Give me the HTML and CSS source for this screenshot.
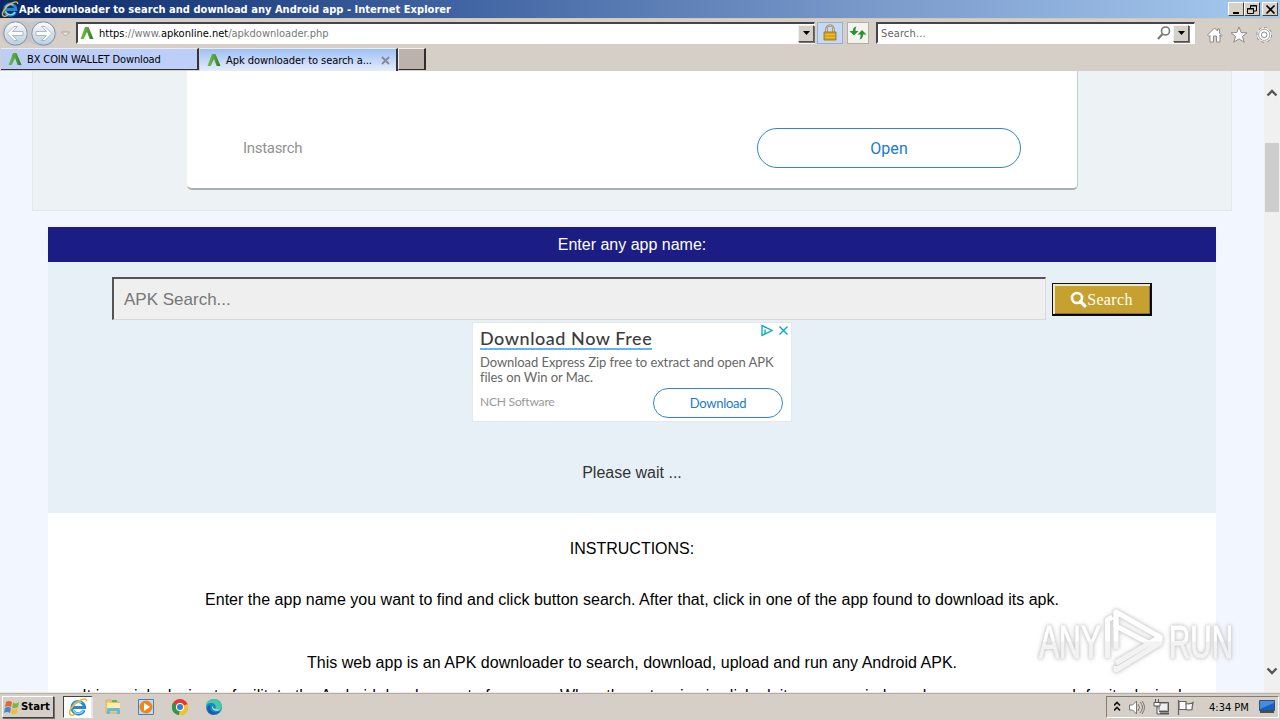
FILE: index.html
```html
<!DOCTYPE html>
<html lang="en">
<head>
<meta charset="utf-8">
<title>Apk downloader</title>
<link rel="stylesheet" href="styles.css">
</head>
<body>
<svg class="defs" width="0" height="0">
  <defs>
    <linearGradient id="leaf" x1="0" x2="1"><stop offset="0" stop-color="#72b944"/><stop offset=".5" stop-color="#57a639"/><stop offset="1" stop-color="#2d7331"/></linearGradient>
    <linearGradient id="round" x1="0" x2="0" y1="0" y2="1"><stop offset="0" stop-color="#fafcff"/><stop offset=".5" stop-color="#dce3ea"/><stop offset="1" stop-color="#b5d0e4"/></linearGradient>
    <linearGradient id="fade" gradientUnits="userSpaceOnUse" x1="0" x2="0" y1="0" y2="92"><stop offset=".44" stop-color="#fff"/><stop offset=".46" stop-color="#f1f1f1"/><stop offset="1" stop-color="#f1f1f1"/></linearGradient>
    <symbol id="apk" viewBox="0 0 16 16"><path d="M1.500 14 6 2h3.500L14.500 14h-3.800L8 7 4.700 14z" fill="url(#leaf)"/></symbol>
    <symbol id="ie" viewBox="0 0 20 20"><path d="M16 13.200A6.200 6.200 0 1 1 16.500 10.500H5.500" fill="none" stroke="#2589cf" stroke-width="3.200"/><path d="M15.400 13.200A5.600 5.600 0 0 1 5 12.500M5 8.500A5.600 5.600 0 0 1 13.500 5.800" fill="none" stroke="#8cdcf8" stroke-width="1.300"/><path d="M3 18C-1 16 4 8 11 4c4-2.500 8-3 7.500.5M3 18c1.200.7 3-.2 4.500-1.200" fill="none" stroke="#f1b62b" stroke-width="1.500"/></symbol>
  </defs>
</svg>

<header class="browser">
  <div class="titlebar">
    <svg class="title-icon" width="18" height="18"><use href="#ie"/></svg>
    <span class="title-text">Apk downloader to search and download any Android app - Internet Explorer</span>
    <div class="window-buttons">
      <span class="win-btn"><svg width="13" height="11"><path d="M3 8h6v2H3z"/></svg></span>
      <span class="win-btn"><svg width="13" height="11" fill="none" stroke="#000"><path d="M4.500 4V1.500h6V7H8M4 2h7M1.500 4.500h6v5h-6zM1 5h7"/></svg></span>
      <span class="win-btn close"><svg width="13" height="11"><path d="m2.500 1.500 8 8m0-8-8 8" stroke="#000" stroke-width="1.700"/></svg></span>
    </div>
  </div>
  <div class="navbar">
    <svg class="history" width="74" height="29">
      <path d="M3 7C7 1 18 0 29 4 43-1 54 2 57 14 54 28 44 31 29 23 12 30 3 27 1 14z" fill="#c6c6ca"/>
      <circle cx="15.500" cy="14.500" r="11.700" fill="url(#round)" stroke="#8293a5"/><circle cx="43.500" cy="14.500" r="11.700" fill="url(#round)" stroke="#8293a5"/>
      <path d="m7 14.500 7-7h3.500l-5 5H23v4H12.500l5 5H14zM52 14.500l-7-7h-3.500l5 5H36v4h10.500l-5 5H45z" fill="#fff" stroke="#9baaba" stroke-width=".8"/>
      <path d="M61.500 13h8L65.500 17z" fill="#ece8e2" stroke="#aaa69f"/>
    </svg>
    <div class="address field">
      <svg width="16" height="16"><use href="#apk"/></svg>
      <span class="url"><b>https</b>://www.<b>apkonline.net</b>/apkdownloader.php</span>
      <span class="drop"><svg width="7" height="4"><path d="M0 0h7L3.500 4z"/></svg></span>
    </div>
    <span class="tool lock"><svg width="16" height="18"><path d="M4.500 9V5a3.500 3.500 0 0 1 7 0V9" fill="none" stroke="#8b7749" stroke-width="2.200"/><path d="M4.500 8V5a3.500 3.500 0 0 1 7 0V8" fill="none" stroke="#eee2b0" stroke-width=".8"/><path d="M2 8h12v8H2z" fill="#dba416" stroke="#9a6a13" stroke-width=".8"/><path d="M3 10.500h10M3 13.500h10" stroke="#edc33c" stroke-width=".8"/></svg></span>
    <span class="tool refresh"><svg width="18" height="18"><path d="M7.500 2.500C4.500 3 4 5 4 7H.5L5 11.500 9.500 7H6.500C6.500 5 6.500 4 7.500 2.500zM10.500 15.500c3-.5 3.500-3 3.500-5h3.500L13 6 8.500 10.500h3c0 2 0 3.500-1 5z" fill="#28932d"/></svg></span>
    <div class="search-field field">
      <span class="search-label">Search...</span>
      <svg class="lens" width="14" height="14" fill="none" stroke="#777"><circle cx="8.500" cy="5" r="4" stroke-width="1.600"/><path d="m5.500 8-4.500 5" stroke-width="2"/></svg>
      <span class="drop"><svg width="7" height="4"><path d="M0 0h7L3.500 4z"/></svg></span>
    </div>
    <svg class="commands" width="70" height="20" fill="#fff" stroke="#8e8a86">
      <path d="m1.500 10 7-7 3 3V4h2v4l2.500 2.500-1 1L14 10v7h-3.500v-6h-3v6H4v-6.500l-1 1z"/>
      <path d="m33 2 2.200 5.500 5.800.3-4.500 3.700 1.700 5.700-5.200-3.300-5.200 3.300 1.700-5.700L25 7.800l5.800-.3z"/>
      <circle cx="58.200" cy="9.800" r="6.600" stroke-width="2.600" stroke-dasharray="2.600 2.580"/>
      <circle cx="58.200" cy="9.800" r="6.400" stroke="#fff" stroke-width="1.200" stroke-dasharray="2.600 2.430"/>
      <circle cx="58.200" cy="9.800" r="5.600" stroke-width=".8"/>
      <circle cx="58.200" cy="9.800" r="2.800"/>
    </svg>
  </div>
  <nav class="tabs">
    <div class="tab"><svg width="16" height="16"><use href="#apk"/></svg><span class="tab-one">BX COIN WALLET Download</span></div>
    <div class="tab active"><svg width="16" height="16"><use href="#apk"/></svg><span class="tab-two">Apk downloader to search a...</span><svg class="tab-close" width="9" height="9"><path d="m1 1 7 7m0-7-7 7" stroke="#83899a" stroke-width="1.800"/></svg></div>
    <div class="new-tab"></div>
  </nav>
</header>

<div class="viewport">
  <main class="page">
    <section class="banner">
      <div class="banner-card"><span class="advertiser">Instasrch</span><a class="open">Open</a></div>
    </section>
    <section class="panel">
      <h1 class="panel-title"><span>Enter any app name:</span></h1>
      <div class="finder">
        <div class="finder-row">
          <div class="query"><span>APK Search...</span></div>
          <div class="submit"><svg width="17" height="17" fill="none" stroke="#fff"><circle cx="7" cy="7" r="5" stroke-width="2.700"/><path d="m10.500 10.500 4.300 4.300" stroke-width="3.200" stroke-linecap="round"/></svg><span>Search</span></div>
        </div>
        <aside class="ad">
          <svg class="ad-marks" width="30" height="14" fill="none" stroke="#00a7c3" stroke-width="1.300"><path d="M2 1.500v10l10-5zM5 5.500v4M5 3v1"/><path d="m19.500 2.500 8 8m0-8-8 8"/></svg>
          <div class="ad-title"><span>Download Now Free</span></div>
          <div class="ad-copy"><span class="copy-one">Download Express Zip free to extract and open APK</span><span class="copy-two">files on Win or Mac.</span></div>
          <div class="ad-foot"><span class="brand">NCH Software</span><a class="download">Download</a></div>
        </aside>
        <p class="wait">Please wait ...</p>
      </div>
      <div class="copy">
        <p class="line heading">INSTRUCTIONS:</p>
        <p class="line enter">Enter the app name you want to find and click button search. After that, click in one of the app found to download its apk.</p>
        <p class="line about">This web app is an APK downloader to search, download, upload and run any Android APK.</p>
        <p class="line more">It is mainly design to facilitate the Android development of any app. When the extension is clicked, it opens a window where users can search for its desired</p>
      </div>
    </section>
  </main>
  <div class="scrollbar">
    <svg class="arrow up" width="12" height="8"><path d="m1.500 6.500 4.500-4.500 4.500 4.500" fill="none" stroke="#555" stroke-width="2.300"/></svg>
    <div class="thumb"></div>
    <svg class="arrow down" width="12" height="8"><path d="m1.500 1.500 4.500 4.500 4.500-4.500" fill="none" stroke="#555" stroke-width="2.300"/></svg>
  </div>
  <svg class="watermark" width="210" height="92" viewBox="0 0 210 92">
    <g class="mark-text"><text x="7" y="58" textLength="62" lengthAdjust="spacingAndGlyphs">ANY</text><text x="137" y="58" textLength="64" lengthAdjust="spacingAndGlyphs">RUN</text></g>
    <path class="mark-shape" d="M75.500 58V20l5-3M84 49V12l44 25-44 26"/>
    <path class="mark-shape" d="M84 12v14l38 20M84 66v4l44-27v-6"/>
  </svg>
</div>

<footer class="taskbar">
  <div class="start"><svg width="16" height="16"><path d="M2 3q3-2 6 0L7 8Q4 6.500 1 8z" fill="#e66632"/><path d="M9 3.500q3 2 6-.5l-1 5q-3 2-6 .500z" fill="#79b943"/><path d="M1 9q3-2 6 0l-1 5q-3-2-6 0z" fill="#4389d0"/><path d="M8 9.500q3 2 6-.5l-1 5q-3 2-6 .500z" fill="#f2bd2e"/></svg><span>Start</span></div>
  <div class="running"><svg width="20" height="20"><use href="#ie"/></svg></div>
  <svg class="launch" width="130" height="20">
    <path d="M6 5V3h5l1 2h7v11H6z" fill="#edcb67" stroke="#ccae55" stroke-width=".7"/><path d="M7 6h13v5H7z" fill="#f7eeb2"/><path d="M7 17v-4q0-2 2-2h9q2 0 2 2v4h-3v-3h-7v3z" fill="#65b9dd"/><path d="M12 4h5" stroke="#60b567" stroke-width="2"/>
    <path d="M38.500 2.500h15v15h-15z" fill="#c6ddf0" stroke="#4b7fbb"/><circle cx="46" cy="10" r="6.500" fill="#ef851d"/><path d="m44 6 6 4-6 4z" fill="#fff"/>
    <circle cx="80" cy="10" r="8" fill="#e33b2e"/><path d="M80 10 73 6a8 8 0 0 0 6 12z" fill="#279b48"/><path d="m80 10 7.500-3A8 8 0 0 1 79 18z" fill="#f5c524"/><circle cx="80" cy="10" r="4" fill="#fff"/><circle cx="80" cy="10" r="3" fill="#3978dd"/>
    <circle cx="114" cy="10" r="8" fill="#168bc9"/><path d="M106 8c1-7 14-9 16 1 0 4-5 5-7 3 2-3 0-6-4-6-3 0-5 2-5 5z" fill="#4ac8a6"/><path d="M111 8c-3 4 2 10 9 6-4 5-12 5-13-2 0-2 2-4 4-4z" fill="#1960ac"/><path d="M114 8c-3 2 0 6 7 4-3 3-9 2-9-2z" fill="#e3e3df"/>
  </svg>
  <div class="tray">
    <svg width="84" height="18" fill="none">
      <path d="m.5 7 3-3 3 3m-6 5 3-3 3 3" stroke="#111" stroke-width="1.600" transform="translate(-.5 .5)"/>
      <path d="M15.500 7v5h3l4 4V3l-4 4z" fill="#fff" stroke="#797571"/><path d="M24 6q3 3 0 7m2-9q5 5 0 11m2-12q5 6 0 13" stroke="#797571"/>
      <path d="M43.500 4.500h11v9h-11z" fill="#aaa" stroke="#555"/><path d="M46 6h7v6h-7z" fill="#eee"/><path d="M46 15.500h9" stroke="#555" stroke-width="2"/><path d="M41.500 1v3M44.500 1v3M40 4.500h6V8h-6zM43 8v8h3" fill="#fff" stroke="#555"/>
      <path d="M64.500 2v15M65 3.500h7v8h-7zM72 5.500q4 1 7-1-1 4-1 7-3 1-6 0z" fill="#fff" stroke="#67625e" stroke-width="1.200"/>
    </svg>
    <span class="clock">4:34 PM</span>
    <svg class="desktop" width="16" height="14"><path d="M.5.500h15v10H.5z" fill="#1960bd" stroke="#315078"/><path d="m1 9 14-6V1H1z" fill="#448be1"/><path d="M1 12h14" stroke="#222" stroke-width="1.500"/></svg>
  </div>
</footer>
</body>
</html>
```
FILE: styles.css
```css
* { box-sizing: border-box; }
body { margin: 0; width: 1280px; height: 720px; overflow: hidden; display: flex; flex-direction: column; font-family: "Liberation Sans", Arial, sans-serif; background: #d5cfc8; }
svg { display: block; flex: none; }
span, a { white-space: nowrap; }
.defs { position: absolute; }
.browser { height: 71px; flex: none; font-family: "DejaVu Sans Condensed", "DejaVu Sans", sans-serif; font-stretch: condensed; font-size: 11px; background: #d5cfc8; }
.titlebar { height: 18px; display: flex; align-items: center; padding: 0 2px 0 1px; background: linear-gradient(90deg, #092667, #4468a5 38%, #7898c9 67%, #a6caf0); color: #fff; }
.title-text { font-weight: bold; letter-spacing: .03px; }
.window-buttons { margin-left: auto; display: flex; }
.win-btn { width: 16px; height: 14px; padding: 1px; background: #d6d1c9; border: 1px solid; border-color: #fff #404040 #404040 #fff; }
.close { margin-left: 2px; }
.navbar { height: 29px; display: flex; align-items: center; border-top: 1px solid #d0cbb9; background: #d5cfc8; }
.field { height: 22px; display: flex; align-items: center; border: 2px solid; border-color: #48424a #fff #fff #48424a; border-right-width: 1px; background: #fff; }
.address { width: 739px; margin-left: 2px; padding: 0 0 0 1px; }
.url { margin-left: 4px; margin-top: 1px; color: #777; }
.url b { font-weight: normal; color: #000; }
.drop { width: 16px; height: 17px; display: grid; place-items: center; margin-left: auto; background: #d5d0c8; border: 1px solid; border-color: #f2f0ed #55514d #55514d #f2f0ed; box-shadow: 1px 1px #77726e; }
.tool { height: 22px; display: grid; place-items: center; border: 1px solid #94b0d3; }
.lock { width: 26px; margin-left: 2px; background: #c5d9f5; }
.refresh { width: 22px; margin-left: 4px; background: #f4f3f0; border-color: #b3aea6; }
.search-field { width: 319px; margin-left: 7px; padding: 0 5px 0 3px; }
.search-label { color: #666; margin-top: 1px; letter-spacing: .15px; }
.lens { margin-left: auto; margin-right: 2px; }
.search-field .drop { margin-left: 0; }
.commands { margin-left: 11px; margin-top: 3px; }
.tabs { height: 24px; display: flex; padding: 1px 0 0 1px; }
.tab { width: 198px; height: 22px; display: flex; align-items: center; gap: 4px; padding-left: 6px; background: #bdcff8; border-right: 2px solid #34323a; border-bottom: 1px solid #34323a; border-top: 1px solid #e8edfa; color: #000; }
.tab-one { letter-spacing: -.12px; margin-top: 1px; }
.tab-two { letter-spacing: -.06px; }
.active { margin-left: 1px; background: linear-gradient(#9ebff5, #e6edfb); border-bottom: 0; height: 23px; }
.tab-close { margin-left: 5px; }
.new-tab { width: 28px; height: 22px; background: #bbb3ab; border: 1px solid; border-color: #f0eeea #302d2a #302d2a #f0eeea; border-right-width: 2px; }
.viewport { position: relative; height: 621px; display: flex; flex: none; overflow: hidden; }
.page { width: 1264px; background: #f2f6fe; overflow: hidden; }
.banner { width: 1200px; height: 140px; margin: 0 auto; background: #edf2f5; border: solid #e3e8f0; border-width: 0 1px 1px; }
.banner-card { width: 891px; height: 119px; margin-left: 154px; display: flex; align-items: center; justify-content: space-between; padding: 37px 56px 0 56px; background: #fff; border-radius: 0 0 5px 5px; border-right: 1px solid #c5cdd2; border-bottom: 2px solid #aaaeb0; }
.advertiser { color: #929292; font-size: 15px; font-family: Roboto, sans-serif; letter-spacing: -.3px; }
.open, .download { display: grid; place-items: center; border: 1px solid #3084d3; color: #2079ce; background: #fff; }
.open { width: 264px; height: 40px; border-radius: 20px; font-size: 16px; font-family: Roboto, sans-serif; letter-spacing: .1px; }
.panel { width: 1168px; margin: 16px auto 0; }
.panel-title { height: 35px; margin: 0; display: grid; place-items: center; background: #1b1d84; color: #fff; font-size: 16px; font-weight: normal; }
.finder { height: 251px; padding-top: 15px; background: #e8f0f7; }
.finder-row { height: 45px; display: flex; align-items: flex-start; margin-left: 64px; gap: 6px; }
.query { width: 934px; height: 43px; display: flex; align-items: center; padding: 2px 0 0 10px; background: #efefef; border: solid; border-width: 2px 1px 1px 2px; border-color: #555355 #d9d9d9 #d9d9d9 #555355; color: #777; font-size: 17px; }
.submit { width: 100px; height: 33px; margin-top: 6px; display: flex; align-items: center; justify-content: center; background: #c7a12f; border: 1px solid #000; border-right-width: 2px; border-bottom-width: 2px; box-shadow: inset 2px 2px #f0e9cf, inset -1px -1px #897337; color: #fff; font: 16px "Liberation Serif", serif; letter-spacing: .35px; outline: 1px solid #111; outline-offset: -1px; }
.submit span { margin-top: 1px; }
.submit svg { margin-top: 1px; }
.ad { position: relative; width: 320px; height: 100px; margin-left: 424px; padding: 7px 8px 0; background: #fff; border: 1px solid #e5e9ec; }
.ad-marks { position: absolute; right: 1px; top: 1px; }
.ad-title { height: 23px; color: #3c3c3c; font: 500 18px/17px Lato, sans-serif; letter-spacing: .55px; margin-left: -1px; }
.ad-title span { display: inline-block; height: 20px; border-bottom: 2px solid #68b1ed; }
.ad-copy { display: grid; color: #666; font: 13px/15px Lato, sans-serif; letter-spacing: -.06px; margin: 2px 0 0 -1px; }
.ad-foot { display: flex; justify-content: space-between; margin: 3px -1px 0 -1px; }
.brand { padding-top: 6px; color: #999; font: 12px/15px Lato, sans-serif; letter-spacing: -.2px; }
.download { width: 130px; height: 30px; border-radius: 15px; font: 13px Lato, sans-serif; letter-spacing: -.3px; margin-right: 1px; }
.wait { margin: 42px 0 0; text-align: center; color: #333; font-size: 16px; line-height: 18px; }
.copy { height: 180px; padding-top: 27px; background: #fff; color: #000; overflow: hidden; }
.line { margin: 0; text-align: center; white-space: nowrap; font-size: 16px; line-height: 18px; }
.enter { margin-top: 33px; letter-spacing: .015px; }
.about { margin-top: 45px; letter-spacing: .02px; }
.more { margin-top: 15px; }
.scrollbar { width: 16px; background: #f0f0f0; display: flex; flex-direction: column; align-items: center; padding: 18px 0; }
.thumb { width: 14px; height: 69px; margin-top: 46px; background: #cdcdcd; }
.down { margin-top: auto; margin-bottom: -1px; }
.watermark { position: absolute; left: 1032px; top: 529px; filter: drop-shadow(0 0 1.500px #bbb) drop-shadow(0 0 2px #ccc); opacity: .8; }
.mark-text { fill: url(#fade); font-size: 46px; font-family: "Liberation Sans", sans-serif; stroke: url(#fade); stroke-width: 1px; }
.mark-shape { fill: none; stroke: url(#fade); stroke-width: 5px; stroke-linejoin: round; }
.taskbar { height: 28px; display: flex; align-items: center; flex: none; padding-left: 2px; background: #d5cfc8; border-top: 1px solid #eeebe6; box-shadow: inset 0 1px #b2ada5; font-family: "DejaVu Sans Condensed", sans-serif; font-stretch: condensed; }
.start { width: 52px; height: 22px; display: flex; align-items: center; gap: 1px; padding-left: 1px; border: 1px solid; border-color: #fff #45413e #45413e #fff; font-size: 11.3px; font-weight: bold; box-shadow: 1px 1px #77726e; }
.running { width: 30px; height: 22px; margin-left: 9px; display: grid; place-items: center; background: #fff; border: 1px solid; border-color: #444 #fff #fff #444; border-right: 2px solid #e9e6e2; }
.launch { margin-left: 7px; }
.tray { width: 173px; height: 22px; margin-left: auto; margin-right: 1px; display: flex; align-items: center; padding: 0 3px 0 7px; border: 1px solid; border-color: #827d77 #fff #fff #827d77; }
.clock { margin: 1px 0 0 11px; font-size: 11px; }
.desktop { margin-left: auto; }
```
